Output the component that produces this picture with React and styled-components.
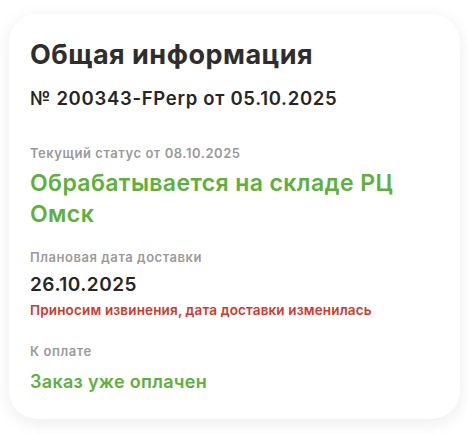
import React from "react";
import styled, { createGlobalStyle } from "styled-components";

const Global = createGlobalStyle`
  html, body { margin: 0; padding: 0; background: #ffffff; }
  body { font-family: "Inter", "Roboto", sans-serif; -webkit-font-smoothing: antialiased; }
`;

const Page = styled.div`
  padding: 14px 7px 15px 9px;
`;

const Card = styled.section`
  box-sizing: border-box;
  width: 451px;
  height: 405px;
  background: #fff;
  border-radius: 28px;
  box-shadow: 0 4px 18px rgba(0, 0, 0, 0.08);
  padding: 24px 21px;
  display: flex;
  flex-direction: column;
`;

const Title = styled.h1`
  margin: 0;
  font-size: 27px;
  line-height: 34px;
  font-weight: 700;
  color: #2e2e2e;
  letter-spacing: 0.5px;
`;

const OrderNo = styled.div`
  margin-top: 14px;
  font-size: 18.5px;
  line-height: 24px;
  font-weight: 600;
  color: #262626;
  letter-spacing: 0.7px;
`;

const Block = styled.div`
  display: flex;
  flex-direction: column;
  margin-top: ${(p) => p.$mt}px;
`;

const Label = styled.div`
  font-size: 13px;
  line-height: 18px;
  font-weight: 600;
  color: #9a9a9a;
  letter-spacing: 0.55px;
`;

const Value = styled.div`
  margin-top: ${(p) => p.$mt || 0}px;
  font-size: ${(p) => p.$size}px;
  line-height: ${(p) => p.$lh}px;
  letter-spacing: ${(p) => p.$ls || 0}px;
  font-weight: 600;
  color: ${(p) => (p.$green ? "#5cb13a" : "#262626")};
`;

const Warning = styled.div`
  margin-top: 4px;
  font-size: 13.5px;
  line-height: 16px;
  font-weight: 600;
  color: #d2382b;
  letter-spacing: 0.15px;
`;

export default function App() {
  return (
    <>
      <Global />
      <Page>
        <Card>
          <Title>Общая информация</Title>
          <OrderNo>№ 200343-FPerp от 05.10.2025</OrderNo>
          <Block $mt={34}>
            <Label>Текущий статус от 08.10.2025</Label>
            <Value $green $size={23} $lh={31} $ls={0.4} $mt={6}>
              Обрабатывается на складе РЦ Омск
            </Value>
          </Block>
          <Block $mt={18}>
            <Label>Плановая дата доставки</Label>
            <Value $size={19} $lh={26} $ls={0.5} $mt={6}>26.10.2025</Value>
            <Warning>Приносим извинения, дата доставки изменилась</Warning>
          </Block>
          <Block $mt={24}>
            <Label>К оплате</Label>
            <Value $green $size={18} $lh={24} $ls={0.3} $mt={10}>Заказ уже оплачен</Value>
          </Block>
        </Card>
      </Page>
    </>
  );
}
